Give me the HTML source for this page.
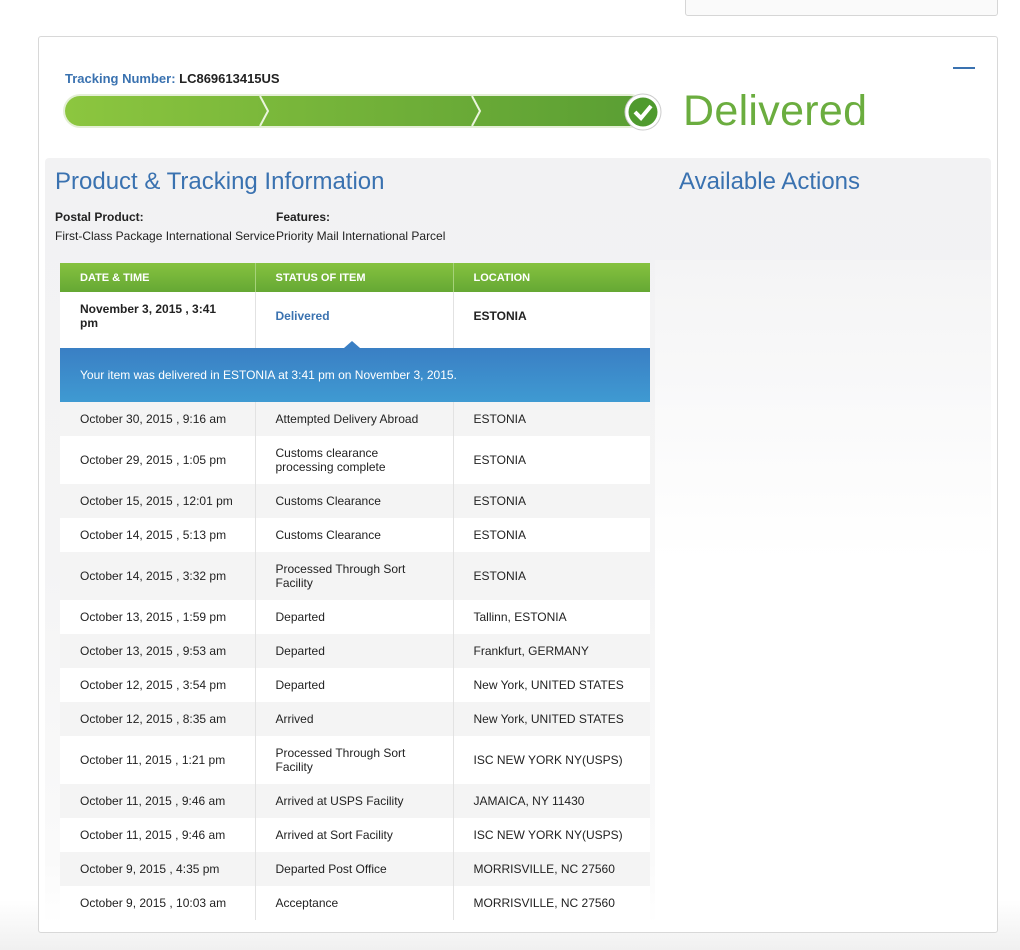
<!DOCTYPE html>
<html><head><style>
*{box-sizing:border-box;margin:0;padding:0}
body{width:1020px;height:950px;background:linear-gradient(#fff 0,#fff 900px,#f0f0f0 950px);font-family:"Liberation Sans",Arial,sans-serif;position:relative;overflow:hidden;color:#222}
.topbox{position:absolute;left:685px;top:-5px;width:313px;height:21px;border:1px solid #d6d6d6;border-radius:3px;background:#fafafa}
.box{position:absolute;left:38px;top:36px;width:960px;height:897px;border:1px solid #d8d8d8;border-radius:3px;background:#fff}
.tn{position:absolute;left:65px;top:71px;font-size:13px;font-weight:bold;color:#3a72b0}
.tn b{color:#222}
.bar{position:absolute;left:65px;top:96px;width:580px;height:30px;border-radius:15px;background:linear-gradient(90deg,#8cc63f,#5a9e33);box-shadow:0 0 0 2px #e4efd6}
.minus{position:absolute;left:953px;top:67px;width:22px;height:2px;background:#3a72b0}
.del{position:absolute;left:683px;top:87px;font-size:43px;color:#6bad3f;letter-spacing:0.3px}
.panel{position:absolute;left:45px;top:158px;width:946px;height:767px;background:linear-gradient(#f2f2f3 0,#f4f4f5 400px,#fafafa 700px,#fff 767px);border-radius:4px}
.right{position:absolute;left:655px;top:260px;width:336px;height:665px;background:linear-gradient(#f4f4f5,#fff 300px,#fff)}
h2{position:absolute;font-weight:normal;font-size:24px;color:#3a72b0}
.lbl{position:absolute;font-size:12px}
table{position:absolute;left:60px;top:263px;width:590px;border-collapse:collapse;font-size:12px}
td,th{padding:0 0 0 20px;text-align:left;vertical-align:middle;border-left:1px solid #e2e2e2}
td:first-child,th:first-child{border-left:none}
th{height:29px;background:linear-gradient(#86c23f,#65a834);color:#fff;font-size:11px;border-left:1px solid #a6d27a}
tr.g td{background:#f4f4f4}
tr.w td{background:#fff}
tr td{height:34px}
tr.t td{height:48px}
tr.f td{height:56px;padding-bottom:9px}
.blue td{background:linear-gradient(#3a7fc4,#3f9ad2);color:#fff;height:54px;border:none}
</style></head><body>
<div class="topbox"></div>
<div class="box"></div>
<div class="tn">Tracking Number: <b>LC869613415US</b></div>
<div class="bar">
<svg width="580" height="30" style="position:absolute;left:0;top:0"><path d="M195 0 L203 15 L195 30" stroke="#eaf5dc" stroke-width="2" fill="none"/><path d="M407 0 L415 15 L407 30" stroke="#eaf5dc" stroke-width="2" fill="none"/></svg>
</div>
<svg style="position:absolute;left:623px;top:92px" width="40" height="40"><circle cx="20" cy="20" r="18" fill="#fff" stroke="#ccc"/><circle cx="20" cy="20" r="14.5" fill="#4f9a2e"/><path d="M12 20 L18 26 L28 14" stroke="#fff" stroke-width="4" fill="none"/></svg>
<div class="del">Delivered</div>
<div class="minus"></div>
<div class="panel"></div>
<div class="right"></div>
<h2 style="left:55px;top:168px">Product &amp; Tracking Information</h2>
<h2 style="left:679px;top:168px">Available Actions</h2>
<div class="lbl" style="left:55px;top:210px;font-weight:bold">Postal Product:</div>
<div class="lbl" style="left:276px;top:210px;font-weight:bold">Features:</div>
<div class="lbl" style="left:55px;top:229px">First-Class Package International Service</div>
<div class="lbl" style="left:276px;top:229px">Priority Mail International Parcel</div>
<table>
<tr><th style="width:195px">DATE &amp; TIME</th><th style="width:198px">STATUS OF ITEM</th><th>LOCATION</th></tr>
<tr class="w f"><td style="font-weight:bold">November 3, 2015 , 3:41<br>pm</td><td style="font-weight:bold;color:#3a72b0">Delivered</td><td style="font-weight:bold">ESTONIA</td></tr>
<tr class="blue"><td colspan="3" style="position:relative">Your item was delivered in ESTONIA at 3:41 pm on November 3, 2015.<span style="position:absolute;left:284px;top:-7px;border-left:8px solid transparent;border-right:8px solid transparent;border-bottom:7px solid #3a7fc4"></span></td></tr>
<tr class="g"><td>October 30, 2015 , 9:16 am</td><td>Attempted Delivery Abroad</td><td>ESTONIA</td></tr>
<tr class="w t"><td>October 29, 2015 , 1:05 pm</td><td>Customs clearance<br>processing complete</td><td>ESTONIA</td></tr>
<tr class="g"><td>October 15, 2015 , 12:01 pm</td><td>Customs Clearance</td><td>ESTONIA</td></tr>
<tr class="w"><td>October 14, 2015 , 5:13 pm</td><td>Customs Clearance</td><td>ESTONIA</td></tr>
<tr class="g t"><td>October 14, 2015 , 3:32 pm</td><td>Processed Through Sort<br>Facility</td><td>ESTONIA</td></tr>
<tr class="w"><td>October 13, 2015 , 1:59 pm</td><td>Departed</td><td>Tallinn, ESTONIA</td></tr>
<tr class="g"><td>October 13, 2015 , 9:53 am</td><td>Departed</td><td>Frankfurt, GERMANY</td></tr>
<tr class="w"><td>October 12, 2015 , 3:54 pm</td><td>Departed</td><td>New York, UNITED STATES</td></tr>
<tr class="g"><td>October 12, 2015 , 8:35 am</td><td>Arrived</td><td>New York, UNITED STATES</td></tr>
<tr class="w t"><td>October 11, 2015 , 1:21 pm</td><td>Processed Through Sort<br>Facility</td><td>ISC NEW YORK NY(USPS)</td></tr>
<tr class="g"><td>October 11, 2015 , 9:46 am</td><td>Arrived at USPS Facility</td><td>JAMAICA, NY 11430</td></tr>
<tr class="w"><td>October 11, 2015 , 9:46 am</td><td>Arrived at Sort Facility</td><td>ISC NEW YORK NY(USPS)</td></tr>
<tr class="g"><td>October 9, 2015 , 4:35 pm</td><td>Departed Post Office</td><td>MORRISVILLE, NC 27560</td></tr>
<tr class="w"><td>October 9, 2015 , 10:03 am</td><td>Acceptance</td><td>MORRISVILLE, NC 27560</td></tr>
</table>
</body></html>
